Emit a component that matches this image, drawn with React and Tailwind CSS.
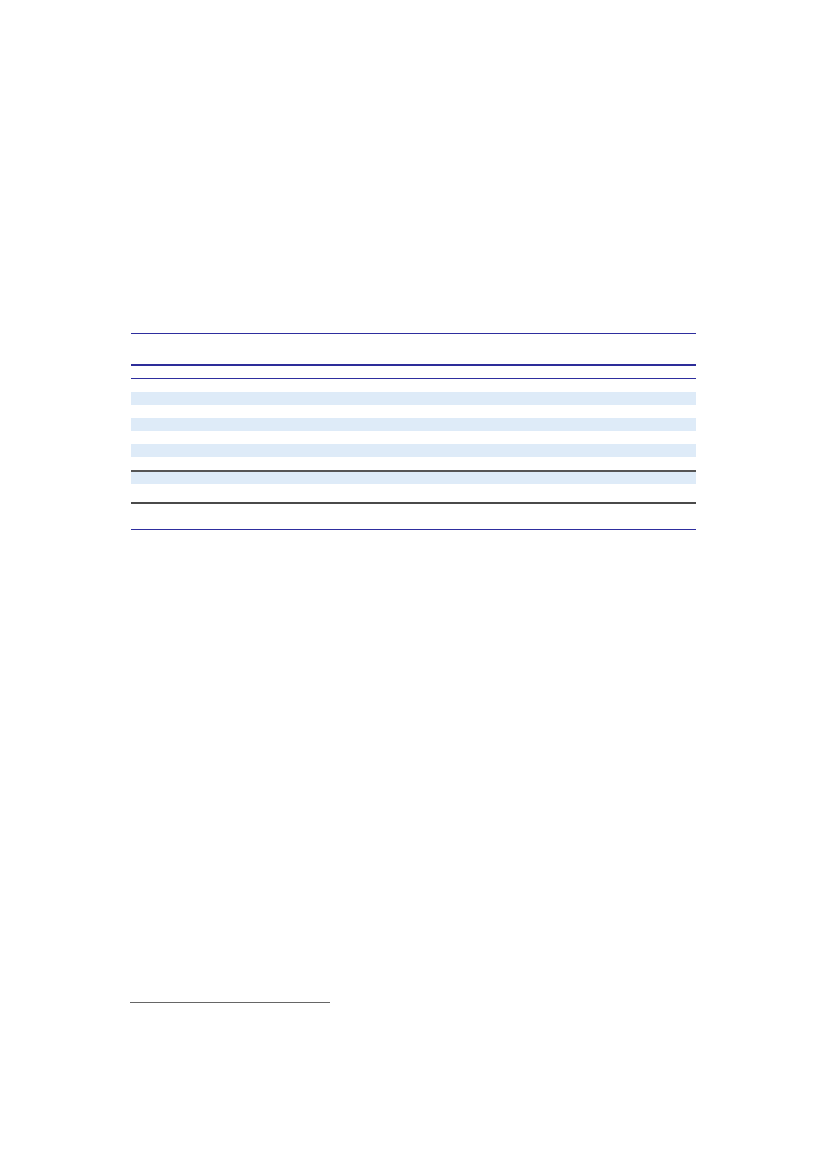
export default function App() {
  return (
    <div className="min-h-[1169px] w-[827px] bg-white pt-[333px]" style={{ fontFamily: '"Liberation Sans", Arial, sans-serif' }}>
      <div className="ml-[131px] w-[565px] flex flex-col">
        <div className="h-px bg-[#2e2e9e]" />
        <div className="h-[30px]" />
        <div className="h-[2px] bg-[#2d2d99]" />
        <div className="h-[12px]" />
        <div className="h-px bg-[#2e2e9e]" />
        <div className="h-[13px]" />
        <div className="h-[13px] bg-[#deebf8]" />
        <div className="h-[13px]" />
        <div className="h-[13px] bg-[#deebf8]" />
        <div className="h-[13px]" />
        <div className="h-[13px] bg-[#deebf8]" />
        <div className="h-[13px]" />
        <div className="h-[2px] bg-[#555555]" />
        <div className="h-[12px] bg-[#deebf8]" />
        <div className="h-[18px]" />
        <div className="h-[2px] bg-[#4a4a4a]" />
        <div className="h-[25px]" />
        <div className="h-px bg-[#2e2e9e]" />
      </div>
      <div className="ml-[130px] mt-[472px] w-[200px] h-px bg-[#666666]" />
    </div>
  );
}
